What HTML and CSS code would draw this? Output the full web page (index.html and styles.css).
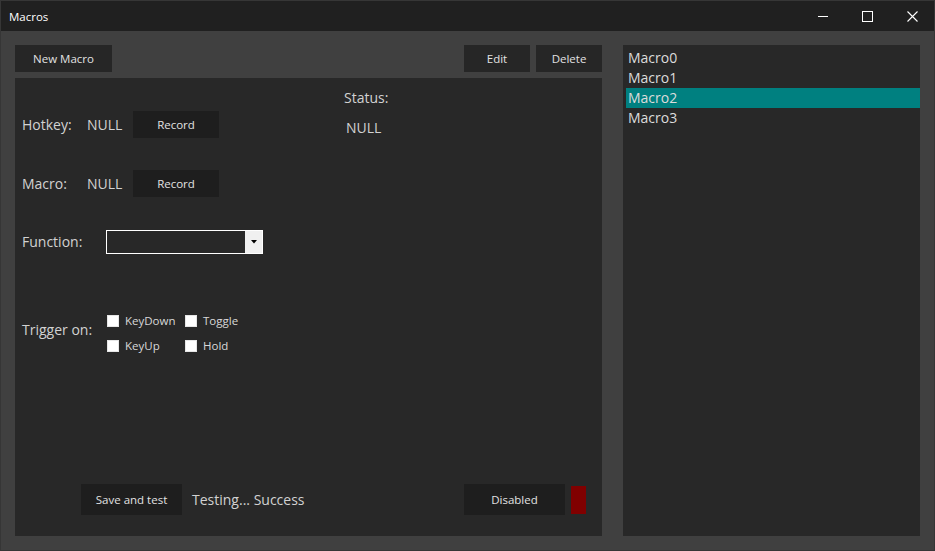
FILE: index.html
```html
<!DOCTYPE html>
<html>
<head>
<meta charset="utf-8">
<title>Macros</title>
<link rel="stylesheet" href="styles.css">
</head>
<body>
<div class="window">
  <div class="titlebar">
    <span class="title">Macros</span>
    <div class="controls">
      <div class="ctl"><svg width="10" height="10" viewBox="0 0 10 10"><path d="M0 5.5H10" stroke="#fff" stroke-width="1"/></svg></div>
      <div class="ctl"><svg width="11" height="11" viewBox="0 0 11 11"><rect x="0.5" y="0.5" width="10" height="10" fill="none" stroke="#fff" stroke-width="1"/></svg></div>
      <div class="ctl"><svg width="11" height="11" viewBox="0 0 11 11"><path d="M0.5 0.5L10.5 10.5M10.5 0.5L0.5 10.5" stroke="#fff" stroke-width="1.1"/></svg></div>
    </div>
  </div>
  <div class="content">
    <div class="leftcol">
      <div class="toolbar">
        <button class="btn btn-new">New Macro</button>
        <div class="spacer"></div>
        <button class="btn btn-small">Edit</button>
        <button class="btn btn-small">Delete</button>
      </div>
      <div class="panel">
        <div class="top">
          <div class="form">
            <div class="row row-hotkey">
              <span class="label lbl-key">Hotkey:</span>
              <span class="value">NULL</span>
              <button class="btn btn-dark btn-record">Record</button>
            </div>
            <div class="row row-macro">
              <span class="label lbl-key">Macro:</span>
              <span class="value">NULL</span>
              <button class="btn btn-dark btn-record">Record</button>
            </div>
            <div class="row row-func">
              <span class="label lbl-func">Function:</span>
              <div class="combo">
                <div class="combo-field"></div>
                <div class="combo-drop"><svg width="6" height="4" viewBox="0 0 6 4"><path d="M0 0H6L3 3.5Z" fill="#000"/></svg></div>
              </div>
            </div>
            <div class="row row-trigger">
              <span class="label lbl-trig">Trigger on:</span>
              <div class="checks">
                <div class="check-row">
                  <label class="check c1"><span class="box"></span>KeyDown</label>
                  <label class="check"><span class="box"></span>Toggle</label>
                </div>
                <div class="check-row">
                  <label class="check c1"><span class="box"></span>KeyUp</label>
                  <label class="check"><span class="box"></span>Hold</label>
                </div>
              </div>
            </div>
          </div>
          <div class="status">
            <div class="label">Status:</div>
            <div class="label status-val">NULL</div>
          </div>
        </div>
        <div class="bottom">
          <button class="btn btn-dark btn-wide">Save and test</button>
          <span class="label result">Testing... Success</span>
          <div class="spacer"></div>
          <button class="btn btn-dark btn-wide">Disabled</button>
          <div class="indicator"></div>
        </div>
      </div>
    </div>
    <div class="list">
      <div class="item">Macro0</div>
      <div class="item">Macro1</div>
      <div class="item selected">Macro2</div>
      <div class="item">Macro3</div>
    </div>
  </div>
</div>
</body>
</html>
```

FILE: styles.css
```css
html, body {
  margin: 0;
  padding: 0;
  background: #404040;
}
* { box-sizing: border-box; }

.window {
  width: 935px;
  height: 551px;
  border: 1px solid #363636;
  background: #404040;
  display: flex;
  flex-direction: column;
  font-family: "Open Sans", "Noto Sans", sans-serif;
  color: #d6d6d6;
}

.titlebar {
  height: 30px;
  background: #202020;
  display: flex;
  align-items: center;
  flex: none;
}
.title {
  margin-left: 8px;
  font-size: 11.5px;
  color: #ffffff;
}
.controls {
  margin-left: auto;
  display: flex;
  height: 30px;
  margin-right: -1px;
}
.ctl {
  width: 45px;
  height: 30px;
  display: flex;
  align-items: center;
  justify-content: center;
}

.content {
  flex: 1;
  display: flex;
  padding: 14px 14px 14px 14px;
}

.leftcol {
  width: 587px;
  display: flex;
  flex-direction: column;
}
.toolbar {
  height: 27px;
  display: flex;
  gap: 6px;
  margin-bottom: 6px;
}
.spacer { flex: 1; }

.btn {
  border: none;
  margin: 0;
  padding: 0;
  font-family: "Open Sans", "Noto Sans", sans-serif;
  font-size: 11.5px;
  color: #e2e2e2;
  background: #262626;
  height: 27px;
}
.btn-new { width: 97px; }
.btn-small { width: 66px; }
.btn-dark { background: #1e1e1e; }
.btn-record { width: 86px; height: 27px; }
.btn-wide { width: 101px; height: 31px; }

.panel {
  flex: 1;
  background: #282828;
  display: flex;
  flex-direction: column;
}
.top {
  display: flex;
}
.form {
  width: 329px;
  padding-left: 7px;
}
.label {
  font-size: 14px;
  line-height: 20px;
  color: #d2d2d2;
}
.value {
  font-size: 14px;
  line-height: 20px;
  color: #d2d2d2;
  width: 46px;
}
.row {
  display: flex;
  align-items: center;
}
.row-hotkey { margin-top: 33px; height: 27px; }
.row-macro { margin-top: 32px; height: 27px; }
.row-func { margin-top: 33px; height: 24px; }
.row-trigger { margin-top: 57px; }

.lbl-key { width: 65px; }
.lbl-func { width: 84px; }
.lbl-trig { width: 85px; padding-bottom: 7px; }

.combo {
  width: 157px;
  height: 24px;
  border: 1px solid #ffffff;
  display: flex;
}
.combo-field { flex: 1; background: #282828; }
.combo-drop {
  width: 17px;
  background: #f0f0f0;
  display: flex;
  align-items: center;
  justify-content: center;
}

.checks {
  display: flex;
  flex-direction: column;
  gap: 5px;
}
.check-row {
  display: flex;
  height: 20px;
  align-items: center;
}
.check {
  display: flex;
  align-items: center;
  font-size: 11.5px;
  line-height: 18px;
  color: #d8d8d8;
  gap: 6px;
}
.check.c1 { width: 78px; }
.box {
  width: 12px;
  height: 12px;
  background: #ffffff;
  border: 1px solid #e6e6e6;
}

.status {
  padding-top: 10px;
}
.status-val {
  margin-top: 10px;
  padding-left: 2px;
}

.bottom {
  margin-top: auto;
  margin-bottom: 21px;
  height: 31px;
  display: flex;
  align-items: center;
  padding-left: 66px;
  padding-right: 16px;
}
.result { margin-left: 10px; }
.indicator {
  width: 15px;
  height: 28px;
  background: #800000;
  margin-left: 6px;
}

.list {
  margin-left: 21px;
  flex: 1;
  background: #282828;
  padding: 3px 0 0 3px;
}
.item {
  height: 20px;
  line-height: 20px;
  font-size: 14px;
  padding-left: 2px;
  color: #dcdcdc;
}
.item.selected { background: #008080; }
```
